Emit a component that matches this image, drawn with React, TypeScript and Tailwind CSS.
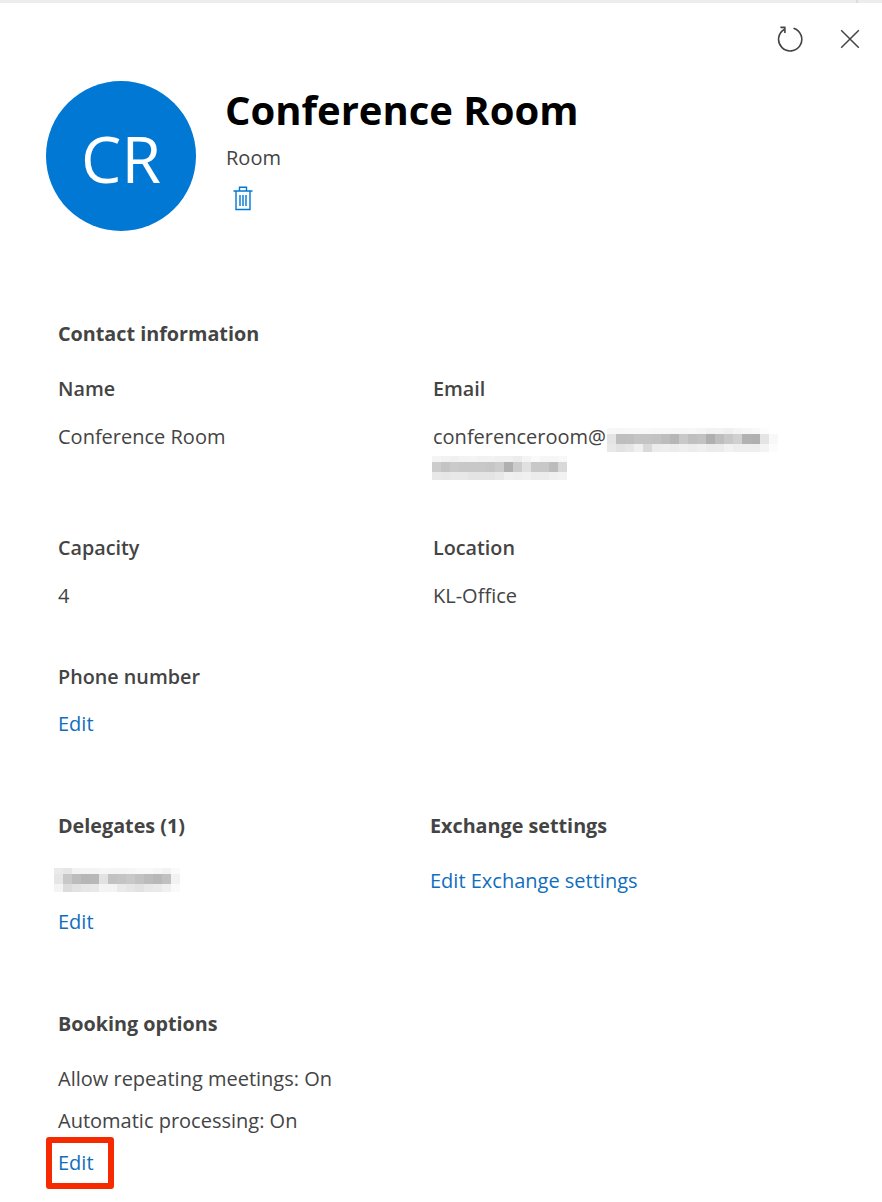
const BLUR_EMAIL_A = [
  [0xf7, 0xf6, 0xf7, 0xf8, 0xf8, 0xf7, 0xf7, 0xf6, 0xf6, 0xf7, 0xf5, 0xf2, 0xf3, 0xf0, 0xf4, 0xf6, 0xf8, 0xfc, 0xff],
  [0xe4, 0xbe, 0xbf, 0xc4, 0xc4, 0xc2, 0xbd, 0xb6, 0xc8, 0xbf, 0xc2, 0xaf, 0xbe, 0xc8, 0xd0, 0xb2, 0xb0, 0xe4, 0xf8],
  [0xe8, 0xe2, 0xe6, 0xf0, 0xd9, 0xec, 0xee, 0xec, 0xef, 0xec, 0xef, 0xeb, 0xec, 0xf2, 0xee, 0xee, 0xee, 0xf4, 0xfc],
]

const BLUR_EMAIL_B = [
  [0xf4, 0xf2, 0xf0, 0xf3, 0xf4, 0xf2, 0xf2, 0xf0, 0xf0, 0xec, 0xf4, 0xfa, 0xf6, 0xf6, 0xf8],
  [0xcc, 0xc4, 0xca, 0xc8, 0xc8, 0xc8, 0xc6, 0xcc, 0xb0, 0xcc, 0xe0, 0xc8, 0xc8, 0xbc, 0xd8],
  [0xe8, 0xe6, 0xe8, 0xe8, 0xe4, 0xe4, 0xe4, 0xe8, 0xf0, 0xee, 0xf0, 0xec, 0xec, 0xf0, 0xf2],
]

const BLUR_DELEGATE = [
  [0xea, 0xe6, 0xf2, 0xf4, 0xf4, 0xf6, 0xf5, 0xf5, 0xf6, 0xf8, 0xf9, 0xf6, 0xf2, 0xfa],
  [0xe6, 0xc8, 0xbc, 0xb6, 0xb8, 0xe2, 0xc2, 0xc4, 0xc8, 0xc2, 0xbc, 0xb8, 0xc0, 0xf2],
  [0xf4, 0xdc, 0xe2, 0xe6, 0xe8, 0xf4, 0xf4, 0xea, 0xe6, 0xe2, 0xe8, 0xea, 0xf0, 0xfa],
]

const ROW_HEIGHTS = ['h-[6px]', 'h-[10px]', 'h-[8px]']

function Blur({ rows, className }: { rows: number[][]; className: string }) {
  return (
    <div className={className}>
      {rows.map((row, r) => (
        <div key={r} className={`flex ${ROW_HEIGHTS[r]}`}>
          {row.map((v, c) => (
            <div
              key={c}
              className="h-full w-[9px]"
              style={{ backgroundColor: `rgb(${v},${v},${v})` }}
            />
          ))}
        </div>
      ))}
    </div>
  )
}

function Heading({ children }: { children: React.ReactNode }) {
  return <div className="h-[27px] text-[19.75px] leading-[27px] font-bold text-[#444]">{children}</div>
}

function Label({ children }: { children: React.ReactNode }) {
  return <div className="h-[27px] text-[19.75px] leading-[27px] font-semibold text-[#444]">{children}</div>
}

function Value({ children }: { children: React.ReactNode }) {
  return <div className="h-[27px] text-[20px] leading-[27px] text-[#444]">{children}</div>
}

function EditLink({ children = 'Edit' }: { children?: React.ReactNode }) {
  return <a className="block h-[27px] text-[20px] leading-[27px] text-[#106ebe]">{children}</a>
}

export default function App() {
  return (
    <div className="h-[1202px] w-[882px] overflow-hidden bg-white font-['Open_Sans','Noto_Sans',sans-serif]">
      <div className="flex h-[3px] bg-[#ededed]">
        <div className="ml-[856px] w-[2px] bg-[#dcdcdc]" />
      </div>

      <div className="flex justify-end gap-[37px] pt-[22px] pr-[22px]">
        <svg width="28" height="28" viewBox="0 0 28 28" fill="none" stroke="#444" strokeWidth="1.6">
          <path d="M9.5 4.2A11.6 11.6 0 1 0 18.5 3.2" />
          <path d="M5.4 2.4H10.5M9.9 2.4L9.9 8" />
        </svg>
        <svg width="20" height="28" viewBox="0 0 20 28" fill="none" stroke="#444" strokeWidth="1.5">
          <path d="M1.2 5.2L18.8 22.8M18.8 5.2L1.2 22.8" />
        </svg>
      </div>

      <div className="flex gap-[30px] pt-[28px] pl-[46px]">
        <div className="flex h-[150px] w-[150px] items-center justify-center rounded-full bg-[#0078d4] pt-[6px] text-[64px] leading-none font-medium text-white">
          CR
        </div>
        <div className="pt-[2px]">
          <h1 className="-ml-[1px] text-[40px] leading-[54px] font-bold text-black">Conference Room</h1>
          <div className="mt-[7px] text-[20px] leading-[27px] font-medium text-[#444]">Room</div>
          <svg className="mt-[15px] ml-[7px]" width="20" height="25" viewBox="0 0 20 25" fill="none" stroke="#0078d4" strokeWidth="1.4">
            <path d="M0.5 5H19.5M6.5 5V1.2H13.5V5M3 5V23.5H17V5M7 9V20M10 9V20M13 9V20" />
          </svg>
        </div>
      </div>

      <div className="px-[58px] pt-[89px]">
        <Heading>Contact information</Heading>

        <div className="mt-[28px] grid grid-cols-[375px_1fr]">
          <div>
            <Label>Name</Label>
            <div className="mt-[21px]"><Value>Conference Room</Value></div>
          </div>
          <div>
            <Label>Email</Label>
            <div className="relative mt-[21px]">
              <Value>conferenceroom@</Value>
              <Blur rows={BLUR_EMAIL_A} className="absolute top-[5px] left-[174px]" />
              <Blur rows={BLUR_EMAIL_B} className="mt-[6px] -ml-[1px]" />
            </div>
          </div>
        </div>

        <div className="mt-[54px] grid grid-cols-[375px_1fr]">
          <div>
            <Label>Capacity</Label>
            <div className="mt-[21px]"><Value>4</Value></div>
          </div>
          <div>
            <Label>Location</Label>
            <div className="mt-[21px]"><Value>KL-Office</Value></div>
          </div>
        </div>

        <div className="mt-[54px]">
          <Label>Phone number</Label>
          <div className="mt-[20px]"><EditLink /></div>
        </div>

        <div className="mt-[75px] grid grid-cols-[372px_1fr]">
          <div>
            <Heading>Delegates (1)</Heading>
            <Blur rows={BLUR_DELEGATE} className="mt-[29px] -ml-[4px]" />
            <div className="mt-[16px]"><EditLink /></div>
          </div>
          <div>
            <Heading>Exchange settings</Heading>
            <div className="mt-[28px]"><EditLink>Edit Exchange settings</EditLink></div>
          </div>
        </div>

        <div className="mt-[75px]">
          <Heading>Booking options</Heading>
          <div className="mt-[28px]"><Value>Allow repeating meetings: On</Value></div>
          <div className="mt-[15px]"><Value>Automatic processing: On</Value></div>
          <div className="relative mt-[15px]">
            <EditLink />
            <div className="absolute -top-[12px] -left-[12px] h-[52px] w-[68px] rounded-[3px] border-[6px] border-[#f52a00]" />
          </div>
        </div>
      </div>
    </div>
  )
}
